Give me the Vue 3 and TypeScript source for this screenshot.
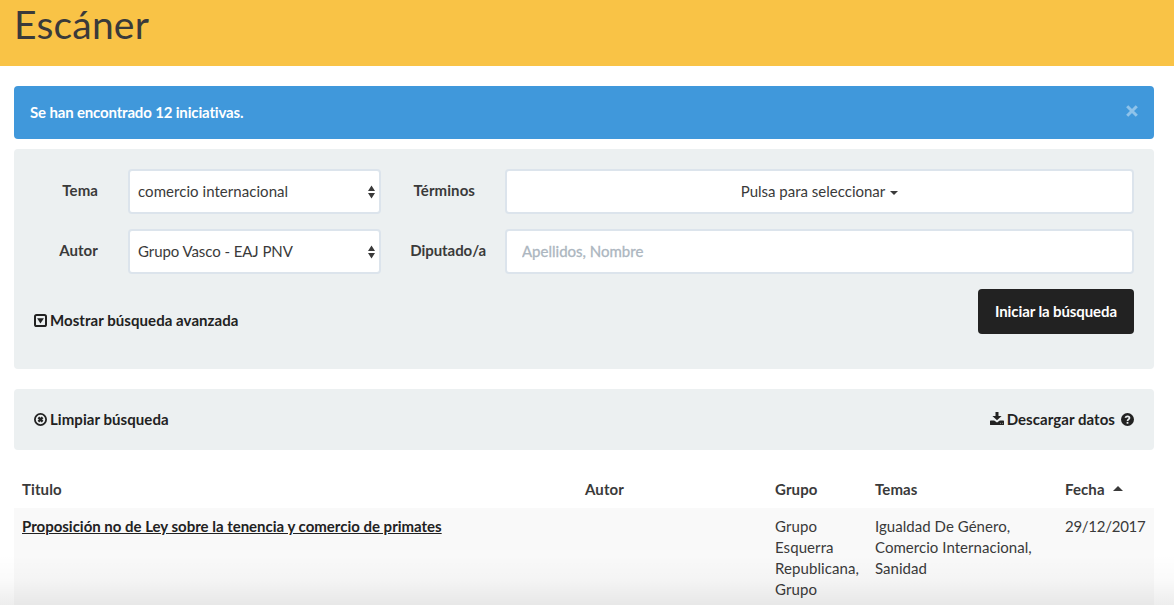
<script setup lang="ts">
import { ref } from 'vue'

interface Initiative {
  title: string
  author: string
  groups: string
  topics: string
  date: string
}

const topic = ref<string>('comercio internacional')
const group = ref<string>('Grupo Vasco - EAJ PNV')
const deputy = ref<string>('')
const showAlert = ref<boolean>(true)

const initiatives: Initiative[] = [
  {
    title: 'Proposición no de Ley sobre la tenencia y comercio de primates',
    author: '',
    groups: 'Grupo Esquerra Republicana, Grupo Ciudadanos',
    topics: 'Igualdad De Género, Comercio Internacional, Sanidad',
    date: '29/12/2017',
  },
]
</script>

<template>
  <div class="page">
    <header class="banner"><h1>Escáner</h1></header>
    <main class="content">
      <div v-if="showAlert" class="alert">
        <strong>Se han encontrado 12 iniciativas.</strong>
        <button class="close" type="button" aria-label="Cerrar" @click="showAlert = false">
          <svg width="12" height="12" viewBox="0 0 12 12"><path d="M1.2 1.2L10.8 10.8M10.8 1.2L1.2 10.8" /></svg>
        </button>
      </div>

      <form class="panel search" @submit.prevent>
        <div class="fields">
          <label>Tema</label>
          <div class="select">
            <span>{{ topic }}</span>
            <svg width="7" height="14" viewBox="0 0 7 14"><path d="M3.5 .6L7 6H0zM3.5 13.4L0 8H7z" /></svg>
          </div>
          <label class="terms">Términos</label>
          <div class="picker">Pulsa para seleccionar<i class="caret"></i></div>
          <label>Autor</label>
          <div class="select group">
            <span>{{ group }}</span>
            <svg width="7" height="14" viewBox="0 0 7 14"><path d="M3.5 .6L7 6H0zM3.5 13.4L0 8H7z" /></svg>
          </div>
          <label class="deputy">Diputado/a</label>
          <input v-model="deputy" type="text" placeholder="Apellidos, Nombre" />
        </div>
        <div class="actions">
          <a class="link advanced">
            <svg class="icon" width="13" height="13" viewBox="0 0 13 13">
              <rect x="1" y="1" width="11" height="11" rx="1.6" fill="none" stroke="currentColor" stroke-width="2" />
              <path d="M3.1 4.2H9.9L6.5 9.4z" />
            </svg>
            Mostrar búsqueda avanzada
          </a>
          <button class="submit" type="submit">Iniciar la búsqueda</button>
        </div>
      </form>

      <div class="panel toolbar">
        <a class="link">
          <svg class="icon" width="13" height="13" viewBox="0 0 13 13">
            <circle cx="6.5" cy="6.5" r="5.6" fill="none" stroke="currentColor" stroke-width="1.8" />
            <path d="M4.4 4.4L8.6 8.6M8.6 4.4L4.4 8.6" stroke="currentColor" stroke-width="2.3" />
          </svg>
          Limpiar búsqueda
        </a>
        <a class="link">
          <svg class="icon download" width="14" height="13" viewBox="0 0 14 13">
            <path d="M5.5 0H8.5V4H11.6L7 8.2 2.4 4H5.5z" />
            <path d="M.7 8.6H4.2L7 10.6 9.8 8.6H13.3Q14 8.6 14 9.2V12.4Q14 13 13.3 13H.7Q0 13 0 12.4V9.2Q0 8.6 .7 8.6z" />
            <path d="M10 11.4h1M12 11.4h1" stroke="#ecf0f1" stroke-opacity=".6" stroke-width=".8" />
          </svg>
          Descargar datos
          <svg class="icon help" width="13" height="13" viewBox="0 0 13 13">
            <circle cx="6.5" cy="6.5" r="6.5" />
            <path d="M4.3 4.7C5 2.9 8.5 2.8 8.5 5C8.5 6.3 6.5 6.2 6.5 8" fill="none" stroke="#ecf0f1" stroke-width="1.7" />
            <rect x="5.6" y="8.9" width="1.8" height="1.8" fill="#ecf0f1" />
          </svg>
        </a>
      </div>

      <table>
        <colgroup><col class="c-title" /><col class="c-author" /><col class="c-group" /><col class="c-topics" /><col /></colgroup>
        <thead>
          <tr>
            <th>Titulo</th>
            <th>Autor</th>
            <th>Grupo</th>
            <th>Temas</th>
            <th>Fecha<i class="sort"></i></th>
          </tr>
        </thead>
        <tbody>
          <tr v-for="item in initiatives" :key="item.title">
            <td><a class="title">{{ item.title }}</a></td>
            <td>{{ item.author }}</td>
            <td class="groups">{{ item.groups }}</td>
            <td class="topics">{{ item.topics }}</td>
            <td class="date">{{ item.date }}</td>
          </tr>
        </tbody>
      </table>
    </main>
    <div class="fade"></div>
  </div>
</template>

<style>
body {
  margin: 0;
  overflow: hidden;
}
</style>

<style scoped>
* {
  box-sizing: border-box;
}
.page {
  position: relative;
  height: 605px;
  overflow: hidden;
  background: #fff;
  color: #3a3a3a;
  font: 15px/21px Lato, sans-serif;
}
.banner {
  height: 66px;
  padding: 3px 14px 0;
  background: #f9c346;
}
h1 {
  margin: 0;
  font-size: 39px;
  line-height: 43px;
  font-weight: 400;
  letter-spacing: 0.2px;
}
.content {
  padding: 20px 20px 0 14px;
}
.alert {
  display: flex;
  justify-content: space-between;
  height: 53px;
  padding: 16px 15px 16px 16px;
  margin-bottom: 10px;
  border-radius: 4px;
  background: #4098db;
  color: #fff;
}
.alert strong {
  letter-spacing: -0.16px;
}
.close {
  display: flex;
  height: 12px;
  margin: 3px 1px 0 0;
  padding: 0;
  border: 0;
  background: none;
}
.close path {
  stroke: #8fc3ea;
  stroke-width: 3;
}
.panel {
  border-radius: 4px;
  background: #ecf0f1;
}
.search {
  height: 220px;
  padding: 20px 20px 0;
  margin-bottom: 20px;
}
.fields {
  display: grid;
  grid-template-columns: 64px 30px 253px 105px 19px 629px;
  row-gap: 15px;
}
.fields label {
  padding-top: 11px;
  text-align: right;
  font-weight: 700;
  letter-spacing: 0.08px;
}
.fields label:nth-of-type(odd) {
  grid-column: 1;
}
.fields label:nth-of-type(even) {
  grid-column: 4;
}
.fields .terms {
  padding-right: 11px;
}
.fields .deputy {
  letter-spacing: -0.06px;
}
.select,
.picker,
.fields input {
  height: 45px;
  border: 2px solid #dce4ec;
  border-radius: 4px;
  background: #fff;
}
.select {
  grid-column: 3;
  display: flex;
  align-items: center;
  justify-content: space-between;
  padding: 0 4px 0 8px;
  letter-spacing: 0.05px;
}
.group {
  letter-spacing: -0.07px;
}
.select svg,
.icon {
  fill: currentColor;
}
.picker,
.fields input {
  grid-column: 6;
}
.picker {
  display: flex;
  align-items: center;
  justify-content: center;
}
.caret {
  margin-left: 5px;
  margin-top: 2px;
  border: 4px solid transparent;
  border-top-color: currentColor;
  border-bottom: 0;
}
.fields input {
  width: 100%;
  padding: 0 15px 1px;
  color: inherit;
  font: inherit;
}
.fields input::placeholder {
  color: #acb6c0;
  opacity: 1;
  -webkit-text-stroke: 0.3px #acb6c0;
}
.actions {
  display: flex;
  justify-content: space-between;
  margin-top: 15px;
}
.link {
  display: flex;
  align-items: center;
  gap: 3px;
  color: #222;
  font-weight: 700;
  letter-spacing: 0.06px;
}
.advanced {
  height: 21px;
  margin-top: 21px;
}
.download {
  position: relative;
  top: -1px;
}
.help {
  margin-left: 3px;
}
.submit {
  width: 156px;
  height: 45px;
  padding: 0;
  border: 0;
  border-radius: 4px;
  background: #222;
  color: #fff;
  font: 700 15px/21px Lato, sans-serif;
  letter-spacing: -0.1px;
}
.toolbar {
  display: flex;
  align-items: center;
  justify-content: space-between;
  height: 61px;
  padding: 0 20px;
  margin-bottom: 21px;
}
table {
  width: 1140px;
  table-layout: fixed;
  border-collapse: collapse;
}
.c-title {
  width: 563px;
}
.c-author {
  width: 190px;
}
.c-group {
  width: 100px;
}
.c-topics {
  width: 190px;
}
th,
td {
  padding: 8px;
  text-align: left;
  vertical-align: top;
}
th {
  letter-spacing: 0.1px;
}
td {
  background: #f9f9f9;
}
.groups {
  letter-spacing: 0.08px;
}
.topics {
  letter-spacing: 0.04px;
}
.date {
  letter-spacing: -0.27px;
}
.title {
  color: #222;
  font-weight: 700;
  text-decoration: underline;
  letter-spacing: -0.01px;
}
.sort {
  display: inline-block;
  margin-left: 8px;
  vertical-align: 4px;
  border: 5px solid transparent;
  border-bottom-color: currentColor;
  border-top: 0;
}
.fade {
  position: absolute;
  inset: auto 0 0;
  height: 50px;
  background: linear-gradient(rgba(0, 0, 0, 0), rgba(0, 0, 0, 0.02) 50%, rgba(0, 0, 0, 0.07));
  pointer-events: none;
}
</style>
